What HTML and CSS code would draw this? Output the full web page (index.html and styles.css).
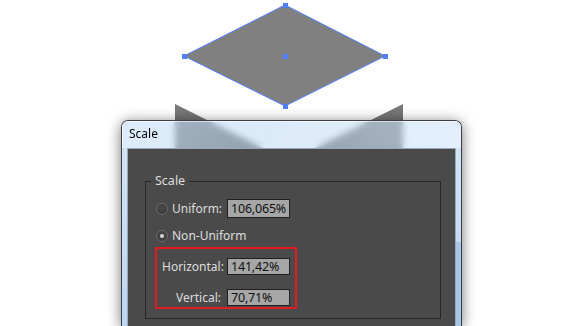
FILE: index.html
```html
<!DOCTYPE html>
<html lang="en">

<head>
    <meta charset="UTF-8">
    <title>Scale</title>
    <link rel="stylesheet" href="styles.css">
</head>

<body>
<div class="canvas">
    <svg class="art" width="572" height="326" viewBox="0 0 572 326">
        <defs>
            <linearGradient id="face" x1="0" y1="104" x2="0" y2="200" gradientUnits="userSpaceOnUse">
                <stop offset="0" stop-color="#7a7a7a"/>
                <stop offset="1" stop-color="#5a5a5a"/>
            </linearGradient>
        </defs>
        <!-- box sides below the selected top face -->
        <polygon points="175,104 289,161 289,326 175,326" fill="url(#face)"/>
        <polygon points="403,104 289,161 289,326 403,326" fill="url(#face)"/>
        <!-- selected top face -->
        <polygon points="285,5 385,56 285,106 184,56" fill="#808080" stroke="#4f7ffa" stroke-width="1"/>
        <rect x="283" y="3" width="5" height="5" fill="#4f7ffa"/>
        <rect x="182" y="54" width="5" height="5" fill="#4f7ffa"/>
        <rect x="383" y="54" width="5" height="5" fill="#4f7ffa"/>
        <rect x="283" y="104" width="5" height="5" fill="#4f7ffa"/>
        <rect x="283" y="54" width="5" height="5" fill="#4f7ffa"/>
    </svg>

    <div class="window">
        <div class="titlebar">Scale</div>
        <div class="frame">
            <div class="panel">
                <div class="group">
                    <span class="legend">Scale</span>
                    <div class="row uniform">
                        <span class="radio"></span>
                        <span class="label">Uniform:</span>
                        <span class="field">106,065%</span>
                    </div>
                    <div class="row">
                        <span class="radio checked"></span>
                        <span class="label">Non-Uniform</span>
                    </div>
                    <div class="axes">
                        <span class="axis-label">Horizontal:</span>
                        <span class="field">141,42%</span>
                        <span class="axis-label">Vertical:</span>
                        <span class="field">70,71%</span>
                    </div>
                </div>
            </div>
        </div>
    </div>
</div>
</body>
</html>
```

FILE: styles.css
```css
* {
    box-sizing: border-box;
}

html, body {
    margin: 0;
    background: #fff;
    overflow: hidden;
}

body {
    font-family: "Noto Sans", sans-serif;
    font-size: 12px;
}

.canvas {
    position: relative;
    width: 572px;
    height: 326px;
    overflow: hidden;
}

.art {
    position: absolute;
    left: 0;
    top: 0;
}

/* dialog window, glass frame */
.window {
    position: absolute;
    left: 121px;
    top: 120px;
    width: 341px;
    height: 206px;
    display: flex;
    flex-direction: column;
    border: 1px solid #3b3f45;
    border-bottom: none;
    border-radius: 7px 7px 0 0;
    overflow: hidden;
    box-shadow: 0 2px 14px rgba(0, 0, 0, 0.55);
}

.titlebar {
    height: 27px;
    flex-shrink: 0;
    padding: 5px 0 0 7px;
    color: #000;
    font-size: 12px;
    line-height: 16px;
    background: linear-gradient(100deg, rgba(200, 224, 248, 0.62) 0%, rgba(185, 214, 244, 0.5) 45%, rgba(210, 230, 250, 0.62) 100%);
    backdrop-filter: blur(3px);
    box-shadow: inset 1px 1px 0 rgba(255, 255, 255, 0.6);
}

.frame {
    flex-grow: 1;
    padding: 0 5px;
    background:
        linear-gradient(#a9c6e6, #a9c6e6) right 94px / 6px 100% no-repeat,
        linear-gradient(#d2e4f6, #bcd6f1);
}

.panel {
    height: 100%;
    background-color: #4a4a4a;
    border: 1px solid #9aa7b4;
    border-bottom: none;
    padding: 32px 14px 0 17px;
    color: #dedede;
}

/* group box */
.group {
    height: 138px;
    border: 1px solid #262626;
    display: flex;
    flex-direction: column;
    padding-left: 10px;
}

.legend {
    align-self: flex-start;
    margin: -9px 0 0 -5px;
    padding: 0 4px;
    height: 16px;
    line-height: 16px;
    font-size: 12.5px;
    background-color: #4a4a4a;
}

.row {
    display: flex;
    align-items: center;
    height: 19px;
    margin-top: 8px;
}

.uniform {
    margin-top: 10px;
}

.radio {
    position: relative;
    width: 12px;
    height: 12px;
    margin-right: 4px;
    border-radius: 50%;
    border: 1px solid #6c6c6c;
    background: radial-gradient(circle at 50% 40%, #4a4a4a, #363636);
}

.radio.checked::after {
    content: "";
    position: absolute;
    left: 3px;
    top: 3px;
    width: 4px;
    height: 4px;
    border-radius: 50%;
    background-color: #d6d6d6;
}

.uniform .label {
    width: 55px;
}

.field {
    width: 63px;
    height: 19px;
    padding-left: 3px;
    border: 1px solid #202020;
    background-color: #a6a6a6;
    color: #111;
    font-size: 12.5px;
    letter-spacing: -0.2px;
    line-height: 17px;
    white-space: nowrap;
    overflow: hidden;
}

/* highlighted pair */
.axes {
    align-self: flex-start;
    display: grid;
    grid-template-columns: 59px 63px;
    column-gap: 6px;
    row-gap: 11px;
    align-items: center;
    width: 142px;
    height: 62px;
    margin: 2px 0 0 -1px;
    padding: 7px 0 0 5px;
    border: 2px solid #e21b23;
}

.axis-label {
    text-align: right;
}

.axes .field {
    height: 17px;
    line-height: 15px;
}
```
